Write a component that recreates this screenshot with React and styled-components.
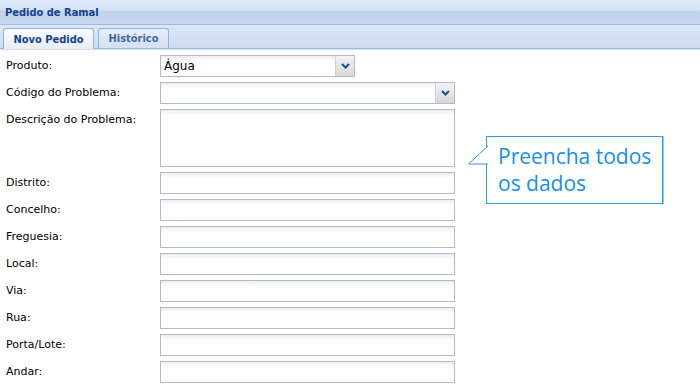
import React from 'react'
import styled, { createGlobalStyle } from 'styled-components'

const GlobalStyle = createGlobalStyle`
  html, body {
    margin: 0;
    padding: 0;
    background: #fff;
  }
  body {
    font-family: Tahoma, "DejaVu Sans", Verdana, sans-serif;
  }
`

const Panel = styled.div`
  width: 700px;
  height: 388px;
  overflow: hidden;
  position: relative;
  background: #fff;
`

const Header = styled.div`
  height: 25px;
  box-sizing: border-box;
  padding: 0 5px;
  display: flex;
  align-items: center;
  border-bottom: 1px solid #99bbe8;
  background: linear-gradient(#dde8f6 0, #d5e3f4 10px, #bfd3ee 11px, #c6d8f0 24px);
  font-family: "DejaVu Sans Condensed", Tahoma, sans-serif;
  font-size: 11px;
  font-weight: bold;
  color: #15428b;
`

const TabStrip = styled.div`
  height: 24px;
  box-sizing: border-box;
  padding: 3px 0 0 3px;
  display: flex;
  align-items: flex-end;
  gap: 4px;
  border-bottom: 1px solid #99bbe8;
  background: linear-gradient(#dbe7f6, #cddcf0);
  box-shadow: 0 1px 0 #d3e1f3;
`

const Tab = styled.div`
  box-sizing: border-box;
  width: ${p => p.$w}px;
  display: flex;
  align-items: center;
  justify-content: center;
  border: 1px solid #8db2e3;
  border-bottom: none;
  border-radius: 3px 3px 0 0;
  font-family: "DejaVu Sans Condensed", Tahoma, sans-serif;
  font-size: 11px;
  font-weight: bold;
  color: ${p => (p.$active ? '#15428b' : '#416aa3')};
  background: ${p =>
    p.$active
      ? 'linear-gradient(#fafcfe, #e6eef9)'
      : 'linear-gradient(#e7eef8, #d3e0f2)'};
  margin-bottom: ${p => (p.$active ? '-1px' : '0')};
  height: ${p => (p.$active ? '21px' : '20px')};
`

const Form = styled.div`
  display: grid;
  grid-template-columns: 154px auto;
  justify-content: start;
  row-gap: 5px;
  padding: 6px 0 0 6px;
`

const Label = styled.label`
  font-size: 11px;
  line-height: 22px;
  color: #000;
`

const fieldBase = `
  box-sizing: border-box;
  border: 1px solid #b5b8c8;
  background: linear-gradient(#e9eef0 0, #fbfcfc 4px, #fff 8px);
`

const TextField = styled.div`
  ${fieldBase}
  width: 295px;
  height: ${p => p.$h || 22}px;
`

const Combo = styled.div`
  ${fieldBase}
  width: ${p => p.$w}px;
  height: 22px;
  display: flex;
  align-items: center;
`

const ComboValue = styled.span`
  flex: 1;
  padding-left: 3px;
  font-size: 12px;
  color: #000;
`

const Trigger = styled.span`
  width: 18px;
  align-self: stretch;
  display: flex;
  align-items: center;
  justify-content: center;
  border-left: 1px solid #d0d2da;
  background: linear-gradient(#f4f4f4, #d7d7d7);
`

const Callout = styled.div`
  position: absolute;
  left: 486px;
  top: 136px;
  width: 177px;
  height: 68px;
  box-sizing: border-box;
  border: 1px solid #2e9cf2;
  box-shadow: 1px 0 0 #86ccff;
  padding: 6px 0 0 11px;
  background: #fff;
  font-family: "Open Sans", "Noto Sans", sans-serif;
  font-size: 21px;
  line-height: 27px;
  color: #1490ef;
`

const Tail = styled.svg`
  position: absolute;
  left: -20px;
  top: 8px;
`

const Chevron = () => (
  <svg width="9" height="6" viewBox="0 0 9 6">
    <path d="M1 1 L4.5 4.5 L8 1" fill="none" stroke="#1f4f8f" strokeWidth="2" />
  </svg>
)

const fields = ['Distrito', 'Concelho', 'Freguesia', 'Local', 'Via', 'Rua', 'Porta/Lote', 'Andar']

export default function App() {
  return (
    <Panel>
      <GlobalStyle />
      <Header>Pedido de Ramal</Header>
      <TabStrip>
        <Tab $active $w={91}>Novo Pedido</Tab>
        <Tab $w={71}>Histórico</Tab>
      </TabStrip>
      <Form>
        <Label>Produto:</Label>
        <Combo $w={195}>
          <ComboValue>Água</ComboValue>
          <Trigger><Chevron /></Trigger>
        </Combo>
        <Label>Código do Problema:</Label>
        <Combo $w={295}>
          <ComboValue />
          <Trigger><Chevron /></Trigger>
        </Combo>
        <Label>Descrição do Problema:</Label>
        <TextField $h={58} />
        {fields.map(f => (
          <React.Fragment key={f}>
            <Label>{f}:</Label>
            <TextField />
          </React.Fragment>
        ))}
      </Form>
      <Callout>
        <Tail width="21" height="20" viewBox="0 0 21 20">
          <path d="M21 1 L1.5 19 L21 19" fill="#fff" stroke="#2e9cf2" strokeWidth="1" />
        </Tail>
        Preencha todos
        <br />
        os dados
      </Callout>
    </Panel>
  )
}
